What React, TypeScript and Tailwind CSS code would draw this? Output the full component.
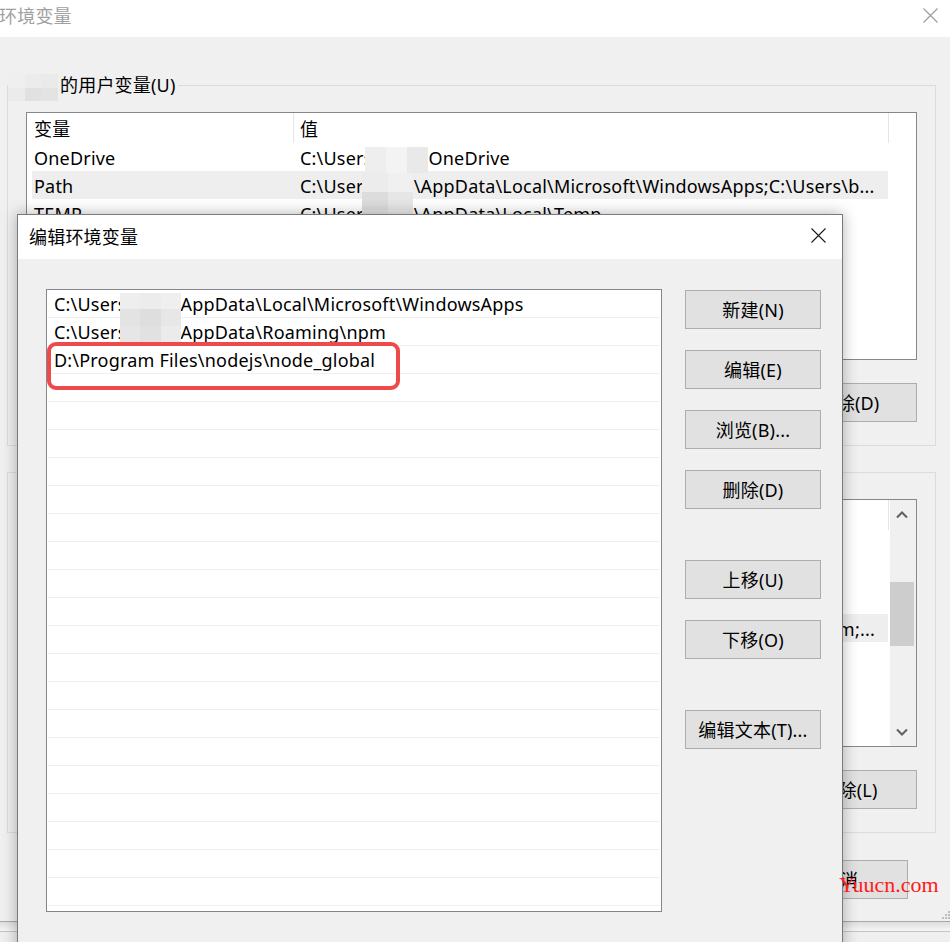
import React from "react";

type Row = { name: string; pre: string; gap?: string; post?: string; selected?: boolean };

const userVars: Row[] = [
  { name: "OneDrive", pre: "C:\\Users", gap: "w-[56px]", post: "OneDrive" },
  {
    name: "Path",
    pre: "C:\\User",
    gap: "w-[50px]",
    post: "\\AppData\\Local\\Microsoft\\WindowsApps;C:\\Users\\b...",
    selected: true,
  },
  { name: "TEMP", pre: "C:\\User", gap: "w-[50px]", post: "\\AppData\\Local\\Temp" },
  { name: "TMP", pre: "C:\\User", gap: "w-[50px]", post: "\\AppData\\Local\\Temp" },
];

const sysVars: Row[] = [
  { name: "JAVA_HOME", pre: "C:\\Program Files\\Java\\jdk1.8.0_201" },
  { name: "NUMBER_OF_PROCESSORS", pre: "12" },
  { name: "OS", pre: "Windows_NT" },
  {
    name: "Path",
    pre: "C:\\WINDOWS\\system32;C:\\WINDOWS;C:\\WINDOWS\\System32\\Wbem;...",
    selected: true,
  },
  { name: "PATHEXT", pre: ".COM;.EXE;.BAT;.CMD;.VBS;.VBE;.JS;.JSE;.WSF;.WSH;.MSC" },
  { name: "PROCESSOR_ARCHITECTURE", pre: "AMD64" },
  { name: "PROCESSOR_IDENTIFIER", pre: "Intel64 Family 6 Model 158 Stepping 10" },
  { name: "PROCESSOR_LEVEL", pre: "6" },
];

const editPaths = [
  { pre: "C:\\Users", gap: true, post: "AppData\\Local\\Microsoft\\WindowsApps" },
  { pre: "C:\\Users", gap: true, post: "AppData\\Roaming\\npm" },
  { pre: "D:\\Program Files\\nodejs\\node_global" },
  ...Array.from({ length: 20 }, () => ({ pre: "" })),
];

const CloseX = ({ className = "" }: { className?: string }) => (
  <svg width="15" height="15" viewBox="0 0 15 15" className={className}>
    <path d="M0.5 0.5 L14.5 14.5 M14.5 0.5 L0.5 14.5" stroke="currentColor" strokeWidth="1.1" fill="none" />
  </svg>
);

const Chevron = ({ down = false }: { down?: boolean }) => (
  <svg width="12" height="8" viewBox="0 0 12 8">
    <path
      d={down ? "M1 1.5 L6 6.5 L11 1.5" : "M1 6.5 L6 1.5 L11 6.5"}
      stroke="#606060"
      strokeWidth="2"
      fill="none"
    />
  </svg>
);

const Btn = ({ label, className = "" }: { label: string; className?: string }) => (
  <div
    className={`flex h-[39px] w-[136px] shrink-0 items-center justify-center border border-[#adadad] bg-[#e1e1e1] ${className}`}
  >
    {label}
  </div>
);

const ListHeader = () => (
  <div className="flex h-[30px] shrink-0">
    <div className="flex w-[267px] items-center border-r border-[#e5e5e5] pl-[7px] pt-[2px]">变量</div>
    <div className="flex w-[595px] items-center border-r border-[#e5e5e5] pl-[6px] pt-[2px]">值</div>
  </div>
);

const UserList = () => (
  <div className="relative h-[248px] overflow-hidden border border-[#828790] bg-white">
    <ListHeader />
    {userVars.map((r) => (
      <div
        key={r.name}
        className={`ml-[5px] flex h-[28px] w-[856px] items-center whitespace-nowrap pt-[2px] ${r.selected ? "bg-[#eeeeee]" : ""}`}
      >
        <div className="w-[268px] pl-[2px]">{r.name}</div>
        <div className="flex">
          <span>{r.pre}</span>
          <span className={`inline-block ${r.gap}`} />
          <span>{r.post}</span>
        </div>
      </div>
    ))}
    {/* redacted user name */}
    <div className="absolute left-[338px] top-[34px] grid h-[26px] w-[63px] grid-cols-3">
      <div className="bg-[#eeeeee]" />
      <div className="bg-[#f3f3f3]" />
      <div className="bg-[#e9e9e9]" />
    </div>
    <div className="absolute left-[335px] top-[60px] grid h-[56px] w-[51px] grid-cols-2 grid-rows-3">
      <div className="bg-[#ececec]" />
      <div className="bg-[#f0f0f0]" />
      <div className="bg-[#dcdcdc]" />
      <div className="bg-[#e6e6e6]" />
      <div className="bg-[#e4e4e4]" />
      <div className="bg-[#ebebeb]" />
    </div>
  </div>
);

const SysList = () => (
  <div className="flex h-[248px] overflow-hidden border border-[#828790] bg-white">
    <div className="w-[863px]">
      <ListHeader />
      {sysVars.map((r) => (
        <div
          key={r.name}
          className={`ml-[5px] flex h-[28px] w-[856px] items-center whitespace-nowrap pt-[2px] ${r.selected ? "bg-[#eeeeee]" : ""}`}
        >
          <div className="w-[268px] shrink-0 pl-[2px]">{r.name}</div>
          <div className="flex w-[588px] justify-end overflow-hidden pr-[13px]">
            <span className={r.selected ? "" : "mr-auto"}>{r.pre}</span>
          </div>
        </div>
      ))}
    </div>
    <div className="flex w-[26px] flex-col bg-[#f0f0f0]">
      <div className="flex h-[30px] items-center justify-center pr-[2px]">
        <Chevron />
      </div>
      <div className="flex-1">
        <div className="mt-[52px] h-[64px] w-[24px] bg-[#cdcdcd]" />
      </div>
      <div className="flex h-[28px] items-center justify-center pr-[2px]">
        <Chevron down />
      </div>
    </div>
  </div>
);

const EnvWindow = () => (
  <div className="relative flex h-[922px] flex-col border-b border-[#a8a8a8] bg-[#f0f0f0]">
    <div className="flex h-[37px] shrink-0 items-center justify-between bg-white">
      <span className="-ml-[1px] mb-[6px] text-[#a0a0a0]">环境变量</span>
      <CloseX className="mb-[7px] mr-[12px] text-[#9a9a9a]" />
    </div>
    <div className="pl-[7px] pr-[14px]">
      <fieldset className="mt-[36px] border border-[#dcdcdc] p-0">
        <legend className="p-0">
          <div className="flex h-[24px] items-center">
            <div className="mt-[5px] grid h-[27px] w-[50px] grid-cols-3 grid-rows-2">
              <div className="bg-[#efefef]" />
              <div className="bg-[#ececec]" />
              <div className="bg-[#eaeaea]" />
              <div className="bg-[#ebebeb]" />
              <div className="bg-[#e1e1e1]" />
              <div className="bg-[#e3e3e3]" />
            </div>
            <span className="ml-[2px] pr-[2px]">的用户变量(U)</span>
          </div>
        </legend>
        <div className="px-[18px] pb-[23px] pt-[15px]">
          <UserList />
          <div className="mt-[23px] flex justify-end gap-[11px]">
            <Btn label="新建(N)..." />
            <Btn label="编辑(E)..." />
            <Btn label="删除(D)" />
          </div>
        </div>
      </fieldset>
      <fieldset className="mt-[14px] border border-[#dcdcdc] p-0">
        <legend className="ml-[8px] p-0">
          <div className="flex h-[24px] items-center pr-[2px]">系统变量(S)</div>
        </legend>
        <div className="px-[18px] pb-[23px] pt-[15px]">
          <SysList />
          <div className="mt-[23px] flex justify-end gap-[11px]">
            <Btn label="新建(W)..." />
            <Btn label="编辑(I)..." />
            <Btn label="删除(L)" />
          </div>
        </div>
      </fieldset>
      <div className="mt-[27px] flex justify-end gap-[11px] pr-[28px]">
        <Btn label="确定" />
        <Btn label="取消" />
      </div>
    </div>
    <svg width="10" height="10" viewBox="0 0 10 10" className="absolute bottom-[2px] right-0">
      <rect x="8" y="2" width="2" height="2" fill="#bcbcbc" />
      <rect x="5" y="5" width="2" height="2" fill="#bcbcbc" />
      <rect x="8" y="5" width="2" height="2" fill="#bcbcbc" />
      <rect x="2" y="8" width="2" height="2" fill="#bcbcbc" />
      <rect x="5" y="8" width="2" height="2" fill="#bcbcbc" />
      <rect x="8" y="8" width="2" height="2" fill="#bcbcbc" />
    </svg>
  </div>
);

const EditDialog = () => (
  <div className="absolute left-[17px] top-[214px] flex h-[760px] w-[826px] flex-col border border-[#7a7a7a] bg-[#f0f0f0] shadow-[0_0_14px_rgba(0,0,0,0.3)]">
    <div className="flex h-[44px] shrink-0 items-center justify-between bg-white pl-[11px] pr-[16px]">
      <span>编辑环境变量</span>
      <CloseX className="mb-[3px] text-[#1a1a1a]" />
    </div>
    <div className="flex pl-[28px] pt-[30px]">
      <div className="relative h-[623px] w-[616px] overflow-hidden border border-[#828790] bg-white">
        {editPaths.map((p, i) => (
          <div
            key={i}
            className="mx-[1px] flex h-[28px] items-center whitespace-nowrap border-b border-[#f0f0f0] pl-[6px]"
          >
            <span>{p.pre}</span>
            {p.gap && <span className="inline-block w-[54px]" />}
            {p.post && <span>{p.post}</span>}
          </div>
        ))}
        {/* redacted user name */}
        <div className="absolute left-[73px] top-[3px] grid h-[49px] w-[61px] grid-cols-3 grid-rows-3">
          <div className="bg-[#eeeeee]" />
          <div className="bg-[#ececec]" />
          <div className="bg-[#efefef]" />
          <div className="bg-[#e3e3e3]" />
          <div className="bg-[#dedede]" />
          <div className="bg-[#e7e7e7]" />
          <div className="bg-[#e6e6e6]" />
          <div className="bg-[#e1e1e1]" />
          <div className="bg-[#ebebeb]" />
        </div>
        {/* annotation */}
        <div className="absolute left-0 top-[52px] h-[48px] w-[353px] rounded-[9px] border-[4px] border-[#ef4a4a]" />
      </div>
      <div className="ml-[23px] flex w-[136px] flex-col pt-[1px]">
        <Btn label="新建(N)" />
        <Btn label="编辑(E)" className="mt-[21px]" />
        <Btn label="浏览(B)..." className="mt-[21px]" />
        <Btn label="删除(D)" className="mt-[21px]" />
        <Btn label="上移(U)" className="mt-[51px]" />
        <Btn label="下移(O)" className="mt-[21px]" />
        <Btn label="编辑文本(T)..." className="mt-[51px]" />
      </div>
    </div>
  </div>
);

export default function App() {
  return (
    <div className="relative h-[942px] w-[950px] overflow-hidden bg-[#efefef] font-['Noto_Sans','Noto_Sans_CJK_SC',sans-serif] text-[18px] leading-[24px] tracking-[0.2px] text-black">
      <EnvWindow />
      <div className="h-[10px] border-b border-[#c4c4c4] bg-gradient-to-b from-[#dedede] to-[#f6f6f6]" />
      <EditDialog />
      <div className="absolute left-[839px] top-[874px] font-['Liberation_Serif',serif] text-[22px] leading-none tracking-normal text-[#ff1a1a]">
        Yuucn.com
      </div>
    </div>
  );
}
